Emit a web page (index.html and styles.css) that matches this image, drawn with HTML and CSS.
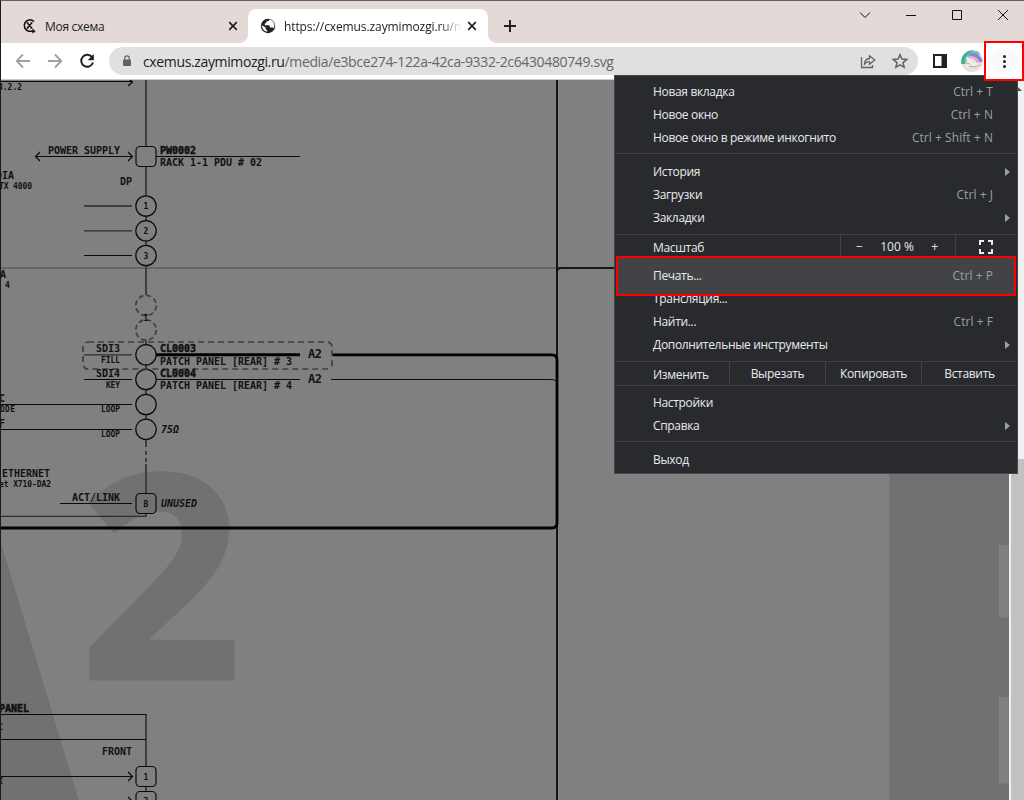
FILE: index.html
```html
<!DOCTYPE html>
<html lang="ru">
<head>
<meta charset="utf-8">
<title>cxemus.zaymimozgi.ru</title>
<link rel="stylesheet" href="styles.css">
</head>
<body>
<div class="window">
  <header class="tabstrip">
    <div class="tab">
      <svg class="tab-icon" width="16" height="16" viewBox="0 0 16 16" fill="none" stroke="#111"><path d="M13 3.600A5.700 5.700 0 1 0 8 13.200h4" stroke-width="1.500"/><path d="M6 4.800l5 5.400M11 4.800l-5 5.400M5.500 4.800h2M9.500 4.800h2M5.500 10.200h2M9.500 10.200h2" stroke-width="1.300"/><path d="M11.500 10.500l3 2.700-3 2.500z" fill="#111" stroke="none"/></svg>
      <span class="tab-title">Моя схема</span>
      <svg class="close" width="10" height="10" viewBox="0 0 10 10"><path d="M1.200 1.200l7.600 7.600M8.800 1.200L1.200 8.800"/></svg>
    </div>
    <div class="tab active">
      <svg class="tab-icon" width="16" height="16" viewBox="0 0 16 16"><circle cx="8" cy="8" r="7.200" fill="#202124"/><path d="M9.300 1.500c-.1 1.500-1.200 1.600-2.700 1.800-.2 1.400-.5 2-1.800 2.200v1.700h4c1 .3 1.100 1 1.100 2.200h2.200c1 0 1.300.5 1.600 1.200 1-2 1-4.800-.6-6.800-1-1.300-2.300-2-3.800-2.300zM1.700 7.200c.2 3.400 2.300 5.900 5.500 6.600v-1.700c-1-.1-1.600-.7-1.600-1.800v-.8z" fill="#fff"/></svg>
      <span class="tab-title fade">https://cxemus.zaymimozgi.ru/me</span>
      <svg class="close" width="10" height="10" viewBox="0 0 10 10"><path d="M1.200 1.200l7.600 7.600M8.800 1.200L1.200 8.800"/></svg>
    </div>
    <svg class="plus" width="12" height="12" viewBox="0 0 12 12"><path d="M6 0v12M0 6h12" stroke="#202124" stroke-width="2"/></svg>
    <div class="controls">
      <svg width="12" height="12" viewBox="0 0 12 12"><path d="M1 3.500l5 5 5-5"/></svg>
      <svg width="12" height="12" viewBox="0 0 12 12"><path d="M1 6.500h10"/></svg>
      <svg width="12" height="12" viewBox="0 0 12 12"><path d="M1.500 1.500h9v9h-9z"/></svg>
      <svg width="12" height="12" viewBox="0 0 12 12"><path d="M1 1l10 10M11 1L1 11"/></svg>
    </div>
  </header>

  <nav class="toolbar">
    <svg class="arrow-icon" width="16" height="16" viewBox="0 0 16 16"><path d="M15 8H2M8 1.500L1.700 8 8 14.500"/></svg>
    <svg class="arrow-icon" width="16" height="16" viewBox="0 0 16 16"><path d="M1 8h13M8 1.500L14.300 8 8 14.500"/></svg>
    <svg class="reload" width="16" height="16" viewBox="0 0 16 16"><path d="M13.300 4.500A6 6 0 1 0 14 9.500" fill="none" stroke="#202124" stroke-width="2"/><path d="M14.800 1v6.200H8.700z" fill="#202124"/></svg>
    <div class="omnibox">
      <svg width="8" height="12" viewBox="0 0 8 12"><path d="M1 4.500h6q1 0 1 1V10q0 1-1 1H1q-1 0-1-1V5.500q0-1 1-1z" fill="#5f6368"/><path d="M1.800 5V3a2.200 2.200 0 0 1 4.400 0V5" fill="none" stroke="#5f6368" stroke-width="1.200"/></svg>
      <span class="url"><b>cxemus.zaymimozgi.ru</b>/media/e3bce274-122a-42ca-9332-2c6430480749.svg</span>
      <svg class="share" width="16" height="16" viewBox="0 0 16 16"><path d="M1.500 4v10.500h11V12M4.500 11c.3-3.500 2-5.300 5-5.500V2.800L14.800 7l-5.300 4.200V8.700c-2.300 0-3.700.7-5 2.300z"/></svg>
      <svg class="star" width="16" height="16" viewBox="0 0 16 16"><path d="M8 1.700l1.900 4.400 4.800.4L11 9.600l1.200 4.700L8 11.800l-4.200 2.500L5 9.600 1.300 6.500l4.800-.4z"/></svg>
    </div>
    <svg class="panel" width="14" height="14" viewBox="0 0 14 14"><path d="M1 1h12v12H1z" fill="none" stroke="#202124" stroke-width="2"/><path d="M8.500 0H14v14H8.500z" fill="#202124"/></svg>
    <svg class="avatar" width="22" height="22" viewBox="0 0 22 22"><defs><clipPath id="face"><circle cx="11" cy="11" r="11"/></clipPath></defs><g clip-path="url(#face)"><path d="M0 0h22v22H0z" fill="#e5e2df"/><path d="M0 14Q0 1 13 0L10 4Q5 8 4 14z" fill="#38b27f"/><path d="M5 12Q7 1 19 3" fill="none" stroke="#68c3df" stroke-width="4"/><path d="M8 5Q17 3 20 12" fill="none" stroke="#8b82d6" stroke-width="3.500"/><path d="M8 7Q14 6 17 13" fill="none" stroke="#e4a9c3" stroke-width="2"/><path d="M5 7q4 0 5 5l6 1 3 3-4 1-6-1-5 1 2-5z" fill="#f2eee5"/><path d="M5 13l4 1M8 16l5 1 6-2" fill="none" stroke="#c9a383"/></g></svg>
    <button class="more" aria-label="Меню"><i></i><i></i><i></i></button>
  </nav>

  <main class="page">
    <svg class="scheme" viewBox="1 80 1008 720" width="1008" height="720">
      <g fill="#717171">
        <text class="mark" transform="translate(109 900) scale(.857 1)" font-size="900" text-anchor="end">A</text>
        <text class="mark two" transform="translate(80.500 678)" font-size="282" textLength="161" lengthAdjust="spacingAndGlyphs">2</text>
        <path d="M889.500 300H1009V545H999v72.500h10V697h-10v86.500h10V800H889.500z"/>
      </g>
      <g fill="none" stroke="#0a0a0a" stroke-width="1">
        <path d="M1 268H557" stroke="#666" stroke-width="2"/>
        <path d="M146 80V146M146 167V195M146 216V220M146 241V245M146 266V295M146 464V493M146 513V517M146 714V766M146 787V791M146 364V370M146 389V394M146 414V419M146 440V447" stroke="#3f3f3f" stroke-width="2"/>
        <path d="M146 451v4M146 458v4M146 340v4" stroke="#3f3f3f" stroke-width="2"/>
        <path d="M1 81.500H132M36 156.500H132M156 156.500H300M84 255.500h48M156 379.500H300M331 379.500H551q6 0 6 4M84 379.500h48M1 404.500H132M1 429.500H132M60 503.500h72M1 714.500H146M1 739.500H146M1 776.500H132"/>
        <path stroke-width="1.300" d="M128 78l4.500 4-4.500 4M128 152l4.500 4.500-4.500 4.500M40 152l-4.500 4.500 4.500 4.500M128 772l4.500 4.500-4.500 4.500M128 797l4.500 4.500"/>
        <path d="M84 206h48" stroke="#3f3f3f" stroke-width="2"/>
        <path d="M84 230.800h48M84 354.800h48M1 516.300H146" stroke="#2d2d2d" stroke-width="1.300"/>
        <path d="M557 80V800" stroke="#161616" stroke-width="2"/>
        <path d="M614 268H561q-4 0-4 4" stroke="#161616" stroke-width="2"/>
        <path d="M156 354.800H300" stroke="#000" stroke-width="3"/>
        <path d="M333 354.800H552q5 0 5 5V523q0 5-5 5H1" stroke="#000" stroke-width="2.800"/>
        <g stroke-width="1.200">
          <rect x="136" y="146.500" width="20" height="20" rx="4"/><rect x="136" y="493.500" width="20" height="20" rx="4"/><rect x="136" y="766.500" width="20" height="20" rx="4"/><rect x="136" y="791.500" width="20" height="20" rx="4"/>
          <circle cx="146" cy="206" r="10.200"/><circle cx="146" cy="230.800" r="10.200"/><circle cx="146" cy="255.500" r="10.200"/><circle cx="146" cy="354.800" r="10.200"/><circle cx="146" cy="379.500" r="10.200"/><circle cx="146" cy="404.500" r="10.200"/><circle cx="146" cy="429.300" r="10.200"/>
        </g>
        <g stroke="#3f3f3f" stroke-width="1.700">
          <circle cx="146" cy="305.500" r="10.200" stroke-dasharray="5 3"/><circle cx="146" cy="330" r="10.200" stroke-dasharray="5 3"/>
          <rect x="83" y="342" width="249" height="27" rx="5" stroke-dasharray="6 4"/>
        </g>
      </g>
      <g class="lbl">
        <text x="48" y="154" textLength="72">POWER SUPPLY</text>
        <text x="160" y="154" textLength="36" class="heavy">PW0002</text>
        <text x="160" y="166" textLength="102">RACK 1-1 PDU # 02</text>
        <text x="120" y="185" textLength="12">DP</text>
        <text x="-4" y="179" textLength="18">DIA</text>
        <text x="0" y="278" textLength="6">A</text>
        <text x="96" y="352" textLength="24">SDI3</text>
        <text x="160" y="352" textLength="36" class="heavy">CL0003</text>
        <text x="160" y="365" textLength="132">PATCH PANEL [REAR] # 3</text>
        <text x="96" y="377" textLength="24">SDI4</text>
        <text x="160" y="377" textLength="36" class="heavy">CL0004</text>
        <text x="160" y="389" textLength="132">PATCH PANEL [REAR] # 4</text>
        <text x="-1" y="402">C</text><text x="-1" y="427">F</text>
        <text x="161" y="433" textLength="18" font-style="italic">75Ω</text>
        <text x="2" y="477" textLength="48">ETHERNET</text>
        <text x="72" y="501" textLength="48">ACT/LINK</text>
        <text x="161" y="507" textLength="36" font-style="italic">UNUSED</text>
        <text x="-1" y="712" textLength="30" class="heavy">PANEL</text>
        <text x="102" y="755" textLength="30">FRONT</text>
      </g>
      <g class="lbl small">
        <text x="-2" y="90" textLength="24">3.2.2</text>
        <text x="-1" y="189" textLength="33">TX 4000</text>
        <text x="5" y="288">4</text>
        <text x="101" y="363" textLength="19">FILL</text>
        <text x="106" y="388" textLength="14">KEY</text>
        <text x="0" y="412" textLength="15">ODE</text>
        <text x="101" y="412" textLength="19">LOOP</text>
        <text x="101" y="437" textLength="19">LOOP</text>
        <text x="-1" y="487" textLength="52">et X710-DA2</text>
        <text x="-2" y="730">C</text><text x="-2" y="784">X</text>
        <g text-anchor="middle"><text x="146" y="209">1</text><text x="146" y="234">2</text><text x="146" y="258.500">3</text><text x="146" y="321">I</text><text x="146" y="506.500">B</text><text x="146" y="779.500">1</text><text x="146" y="804">2</text></g>
      </g>
      <g class="lbl big"><text x="308" y="358" textLength="14">A2</text><text x="308" y="383" textLength="14">A2</text></g>
    </svg>
    <div class="scrollbar"><svg width="9" height="6" viewBox="0 0 9 6"><path d="M0 5l4-4 4 4z" fill="#505050"/></svg><div class="thumb"></div></div>
  </main>

  <div class="menu">
    <div class="item"><span>Новая вкладка</span><kbd>Ctrl + T</kbd></div>
    <div class="item"><span>Новое окно</span><kbd>Ctrl + N</kbd></div>
    <div class="item"><span>Новое окно в режиме инкогнито</span><kbd>Ctrl + Shift + N</kbd></div>
    <hr>
    <div class="item sub"><span>История</span></div>
    <div class="item"><span>Загрузки</span><kbd>Ctrl + J</kbd></div>
    <div class="item sub"><span>Закладки</span></div>
    <div class="split zoom">
      <span class="head">Масштаб</span>
      <div class="zoomer"><span>−</span><span class="pct">100 %</span><span>+</span></div>
      <div class="full"><svg width="14" height="14" viewBox="0 0 14 14" fill="none" stroke="#e8eaed" stroke-width="2"><path d="M1 5V1h4M9 1h4v4M13 9v4H9M5 13H1V9"/></svg></div>
    </div>
    <div class="item print"><span>Печать...</span><kbd>Ctrl + P</kbd></div>
    <div class="item"><span>Трансляция...</span></div>
    <div class="item"><span>Найти...</span><kbd>Ctrl + F</kbd></div>
    <div class="item sub"><span>Дополнительные инструменты</span></div>
    <div class="split edit">
      <span class="head">Изменить</span>
      <span class="cell">Вырезать</span><span class="cell">Копировать</span><span class="cell">Вставить</span>
    </div>
    <div class="item"><span>Настройки</span></div>
    <div class="item sub"><span>Справка</span></div>
    <hr>
    <div class="item"><span>Выход</span></div>
  </div>
</div>
</body>
</html>
```
FILE: styles.css
```css
* { box-sizing: border-box; }
body { margin: 0; overflow: hidden; font: 12px "Open Sans", "Noto Sans", sans-serif; color: #202124; }
svg { display: block; flex: none; }
.window { position: relative; width: 1024px; height: 800px; display: flex; flex-direction: column; border-left: 1px solid #1b1b1b; border-top: 1px solid #655f5f; background: #fff; }

.tabstrip { height: 42px; flex: none; display: flex; align-items: flex-end; background: #e3dad8; }
.tab { width: 247px; height: 34px; padding: 0 10px 0 20px; display: flex; align-items: center; position: relative; }
.tab.active { width: 240px; padding: 0 11px 0 12px; background: #fff; border-radius: 8px 8px 0 0; }
.tab.active::before, .tab.active::after { content: ""; position: absolute; bottom: 0; width: 8px; height: 8px; }
.tab.active::before { left: -8px; background: radial-gradient(circle at 0 0, transparent 7.5px, #fff 8px); }
.tab.active::after { right: -8px; background: radial-gradient(circle at 100% 0, transparent 7.5px, #fff 8px); }
.tab-title { margin-left: 8px; flex: 1; white-space: nowrap; overflow: hidden; letter-spacing: -.3px; }
.fade { letter-spacing: -.1px; -webkit-mask-image: linear-gradient(90deg, #000 156px, transparent 177px); mask-image: linear-gradient(90deg, #000 156px, transparent 177px); }
.close { fill: none; stroke: #202124; stroke-width: 1.7; }
.tab .close { margin-left: 10px; }
.active .close { margin-left: 5px; }
.plus { margin: 0 0 11px 16px; }
.controls { margin-left: auto; margin-right: 15px; align-self: flex-start; padding-top: 8px; display: flex; gap: 34px; fill: none; stroke: #111; }

.toolbar { height: 37px; flex: none; display: flex; align-items: center; padding-left: 14px; border-bottom: 1px solid #c9c9c9; background: #fff; }
.arrow-icon { margin-right: 16px; fill: none; stroke: #a0a0a0; stroke-width: 1.8; }
.reload { margin-right: 14px; }
.omnibox { width: 809px; height: 28px; border-radius: 14px; background: #e0e0e0; display: flex; align-items: center; padding: 0 10px 0 14px; }
.url { margin-left: 12px; flex: 1; font-size: 14px; letter-spacing: -.36px; white-space: nowrap; color: #666; }
.url b { font-weight: 400; color: #202124; }
.share, .star { fill: none; stroke: #5f6368; stroke-width: 1.3; }
.star { margin-left: 16px; stroke-width: 1.5; }
.panel { margin-left: 15px; }
.avatar { margin-left: 14px; }
.more { position: absolute; left: 983px; top: 40px; width: 40px; height: 40px; z-index: 3; border: 2px solid #f00; background: radial-gradient(circle, #fafafa 13px, #fff 14px); padding: 0; display: flex; flex-direction: column; align-items: center; justify-content: center; gap: 2px; }
.more i { width: 3px; height: 3px; border-radius: 50%; background: #202124; }

.page { flex: 1; display: flex; min-height: 0; background: #808080; }
.scheme { overflow: hidden; background: #808080; }
.mark { font-family: "Open Sans", sans-serif; font-weight: 700; }
.two { stroke: #717171; stroke-width: 5px; stroke-linejoin: round; }
.lbl { font: bold 10px "DejaVu Sans Mono", monospace; fill: #111; }
.heavy { stroke: #111; stroke-width: .5px; }
.small { font-size: 8px; }
.big { font-size: 12px; }
.scrollbar { width: 15px; padding: 6px 0 0 5px; background: #f1f1f1; display: flex; flex-direction: column; }
.thumb { margin: 367px 0 0 -3px; flex: 1; background: #c1c1c1; }

.menu { position: absolute; left: 613px; top: 74px; width: 404px; height: 399px; padding: 4px 1px 0; border: 1px solid #46474b; background: #292a2d; color: #e8eaed; z-index: 2; letter-spacing: -.33px; }
.item { height: 23px; padding: 0 23px 0 37px; display: flex; align-items: center; justify-content: space-between; white-space: nowrap; position: relative; }
kbd { font: inherit; color: #9aa0a6; letter-spacing: .05px; }
.sub { padding-right: 6px; }
.sub::after { content: ""; border-left: 5px solid #9aa0a6; border-top: 4px solid transparent; border-bottom: 4px solid transparent; }
.menu hr { margin: 4px 0 6px; border: 0; height: 1px; background: #3f4043; }
.split { display: flex; border-top: 1px solid #3f4043; }
.head { padding-left: 37px; display: flex; align-items: center; padding-top: 2px; }
.zoom { height: 22px; margin-top: 5px; }
.zoom .head { width: 224px; padding-top: 4px; }
.zoomer { width: 116px; border: solid #3f4043; border-width: 0 1px; display: flex; align-items: center; justify-content: space-between; padding: 2px 17px 0 15px; letter-spacing: 0; }
.full { flex: 1; display: grid; place-items: center; padding-top: 3px; }
.print { height: 40px; margin-bottom: -9px; padding: 0 21px 2px 35px; border: 2px solid #f00; background: #424346; z-index: 1; }
.edit { height: 25px; margin: 5px 0; border-bottom: 1px solid #3f4043; }
.edit .head { width: 113px; flex: none; }
.cell { width: 96px; flex: none; border-left: 1px solid #3f4043; display: grid; place-items: center; }
```
